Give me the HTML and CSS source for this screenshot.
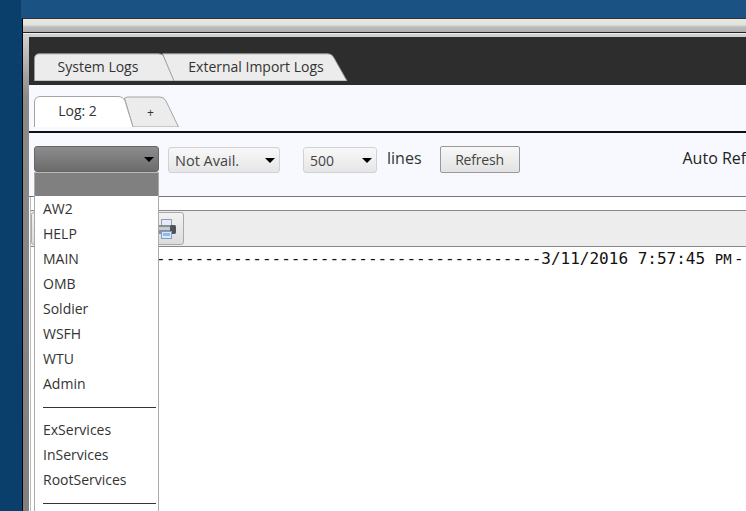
FILE: index.html
```html
<!DOCTYPE html>
<html lang="en">
<head>
<meta charset="utf-8">
<title>Logs</title>
<link rel="stylesheet" href="styles.css">
</head>
<body>
<div class="screen">
  <div class="rail"></div>
  <div class="main">
    <div class="topbar"></div>
    <div class="window">
      <div class="titlebar"></div>
      <div class="titlegap"></div>
      <div class="content">
        <div class="frame"></div>
        <div class="panel">
          <div class="darkstrip">
            <div class="tab tab-system">
              <svg class="tabshape" viewBox="0 0 141 28" preserveAspectRatio="none"><path d="M.5 28V6Q.5 1 5 .8H124Q129 .8 131 5L141 28Z" fill="#ececec" stroke="#9a9a9a"/></svg>
              <span class="tablabel">System Logs</span>
            </div>
            <div class="tab tab-external">
              <svg class="tabshape" viewBox="0 0 186 28" preserveAspectRatio="none"><path d="M.5 .8H165Q170 .8 172 5L185 28H12Z" fill="#ececec" stroke="#9a9a9a"/></svg>
              <span class="tablabel">External Import Logs</span>
            </div>
          </div>
          <div class="logtabs">
            <div class="tab tab-log">
              <svg class="tabshape" viewBox="0 0 99 31" preserveAspectRatio="none"><path d="M.5 31V6Q.5 1 6 .5H84Q89 .5 91 5L99 31" fill="#fff" stroke="#a5a5a5"/></svg>
              <span class="tablabel">Log: 2</span>
            </div>
            <div class="tab tab-plus">
              <svg class="tabshape" viewBox="0 0 55 31" preserveAspectRatio="none"><path d="M.5 2Q3 .5 8 1H36Q40 1 42 5L54.500 31H9Z" fill="#ececec" stroke="#a5a5a5"/></svg>
              <span class="tablabel">+</span>
            </div>
          </div>
          <div class="controls">
            <div class="combo-wrap">
              <div class="combo combo-open"><span class="arrow"></span></div>
              <div class="droplist">
                <div class="dropfirst"></div>
                <div class="dropitem">AW2</div>
                <div class="dropitem">HELP</div>
                <div class="dropitem">MAIN</div>
                <div class="dropitem">OMB</div>
                <div class="dropitem">Soldier</div>
                <div class="dropitem">WSFH</div>
                <div class="dropitem">WTU</div>
                <div class="dropitem">Admin</div>
                <div class="dropsep"></div>
                <div class="dropitem">ExServices</div>
                <div class="dropitem">InServices</div>
                <div class="dropitem">RootServices</div>
                <div class="dropsep"></div>
              </div>
            </div>
            <div class="combo combo-avail"><span>Not Avail.</span><span class="arrow"></span></div>
            <div class="combo combo-lines"><span>500</span><span class="arrow"></span></div>
            <span class="lines">lines</span>
            <button class="refresh">Refresh</button>
            <span class="autorefresh">Auto Refresh</span>
          </div>
          <div class="logarea">
            <div class="toolbar">
              <div class="printbtn">
                <svg width="19" height="22" viewBox="0 0 19 22">
                  <rect x="4.500" y="1.500" width="10" height="7" fill="#e4ecf8" stroke="#8f9fb8"/>
                  <rect x="0" y="7" width="19" height="9" rx="2" fill="#8b8f94"/>
                  <rect x="13" y="7" width="6" height="9" rx="2" fill="#4f5358"/>
                  <rect x="1" y="9" width="12" height="3" fill="#c8ccd1"/>
                  <rect x="4.500" y="13.500" width="10" height="7" fill="#dce8fa" stroke="#7f9cc8"/>
                  <rect x="6" y="15" width="7" height="3" fill="#8dbaee"/>
                </svg>
              </div>
            </div>
            <div class="logtext">----------------------------------------3/11/2016 7:57:45 <span class="ampm">PM</span>-</div>
          </div>
        </div>
      </div>
    </div>
  </div>
</div>
</body>
</html>
```
FILE: styles.css
```css
* { box-sizing: border-box; }
html, body { margin: 0; padding: 0; }
body { font-family: "Open Sans", "Liberation Sans", sans-serif; color: #333; background: #0a3f6c; }
.screen { display: flex; width: 746px; height: 511px; overflow: hidden; }
.rail { width: 21px; flex: none; background: #0a3f6c; }
.main { flex: 1; min-width: 0; display: flex; flex-direction: column; }
.topbar { height: 18px; flex: none; background: #1a5283; }
.window { flex: 1; min-height: 0; display: flex; flex-direction: column; border-left: 1px solid #000; margin-left: 1px; border-top: 1px solid #333; background: #d4d4d4; }
.titlebar { height: 14px; flex: none; background: linear-gradient(#e8e8e3 0, #e2e2dd 45%, #bdbdbd 60%, #b0b0b0 100%); border-bottom: 1px solid #222; }
.titlegap { height: 4px; flex: none; background: #cfcfcf; border-top: 1px solid #eee; }
.content { flex: 1; min-height: 0; display: flex; }
.frame { width: 6px; flex: none; background: linear-gradient(#cfcfcf 0, #8a8a8a 60px, #808080 100%); }
.panel { flex: 1; min-width: 0; display: flex; flex-direction: column; background: #fff; overflow: hidden; }
.darkstrip { height: 48px; flex: none; display: flex; align-items: flex-end; padding: 0 0 4px 5px; background: #2d2d2d; }
.tab { position: relative; flex: none; display: flex; align-items: center; justify-content: center; font-size: 14px; color: #333; }
.tabshape { position: absolute; inset: 0; width: 100%; height: 100%; }
.tablabel { position: relative; }
.tab-system { width: 141px; height: 28px; padding: 0 13px 2px 0; }
.tab-external { width: 186px; height: 28px; margin-left: -13px; padding: 0 9px 2px 11px; }
.logtabs { height: 48px; flex: none; display: flex; align-items: flex-start; padding: 11px 0 0 5px; background: #f7f9ff; border-bottom: 2px solid #111; }
.tab-log { width: 99px; height: 31px; padding: 0 12px 2px 0; z-index: 1; }
.tab-plus { width: 55px; height: 31px; margin-left: -9px; padding: 2px 2px 0 0; font-size: 12px; }
.controls { height: 64px; flex: none; display: flex; align-items: flex-start; padding: 13px 0 0 5px; background: #f7f9ff; border-bottom: 1px solid #777; white-space: nowrap; position: relative; z-index: 2; }
.combo-wrap { position: relative; flex: none; width: 125px; height: 26px; }
.combo { height: 26px; display: flex; align-items: center; justify-content: space-between; flex: none; font-size: 14.500px; border: 1px solid #d2d2d2; border-radius: 3px; background: linear-gradient(#f8f8f8, #e6e6e6); color: #444; padding: 0 4px 0 6px; }
.combo-open { width: 125px; justify-content: flex-end; border-color: #666; background: linear-gradient(#8c8c8c, #6c6c6c); }
.combo-avail { width: 112px; margin: 1px 0 0 9px; }
.combo-lines { width: 74px; margin: 1px 0 0 23px; font-size: 14px; }
.arrow { width: 0; height: 0; border-left: 5px solid transparent; border-right: 5px solid transparent; border-top: 5px solid #000; flex: none; }
.droplist { position: absolute; left: 0; top: 26px; width: 125px; background: #fff; border: 1px solid #aaa; border-top: 1px solid #bbb; border-bottom: 0; }
.dropfirst { height: 23px; background: #808080; }
.dropitem { height: 25px; display: flex; align-items: center; padding-left: 8px; font-size: 14px; color: #333; }
.dropsep { height: 21px; margin: 0 2px 0 8px; border-bottom: 1px solid #333; transform: translateY(-9px); }
.lines { margin: 1px 0 0 10px; font-size: 16px; line-height: 22px; color: #333; flex: none; }
.refresh { width: 80px; height: 27px; margin: 0 0 0 18px; flex: none; font: 14px "Open Sans", "Liberation Sans", sans-serif; letter-spacing: -.2px; color: #444; background: linear-gradient(#f8f8f8, #e2e2e2); border: 1px solid #999; border-radius: 2px; padding: 0; }
.autorefresh { margin: 1px 0 0 163px; font-size: 16px; line-height: 22px; color: #222; flex: none; }
.logarea { flex: 1; min-height: 0; display: flex; flex-direction: column; margin-left: 1px; border-left: 1px solid #bbb; padding-top: 13px; background: #fff; }
.toolbar { height: 37px; flex: none; display: flex; justify-content: flex-start; padding: 1px 0 0 0; background: #ededed; border-top: 1px solid #888; border-bottom: 1px solid #888; }
.printbtn { width: 153px; height: 33px; flex: none; display: flex; align-items: center; justify-content: flex-end; padding: 0 7px 0 0; background: linear-gradient(#f2f2f2, #dcdcdc); border: 1px solid #aaa; border-radius: 3px; }
.logtext { padding: 2px 0 0 125px; font: 16px/20px "DejaVu Sans Mono", "Liberation Mono", monospace; white-space: nowrap; color: #111; }
.ampm { font-size: 14px; display: inline-block; width: 19.200px; }
```
